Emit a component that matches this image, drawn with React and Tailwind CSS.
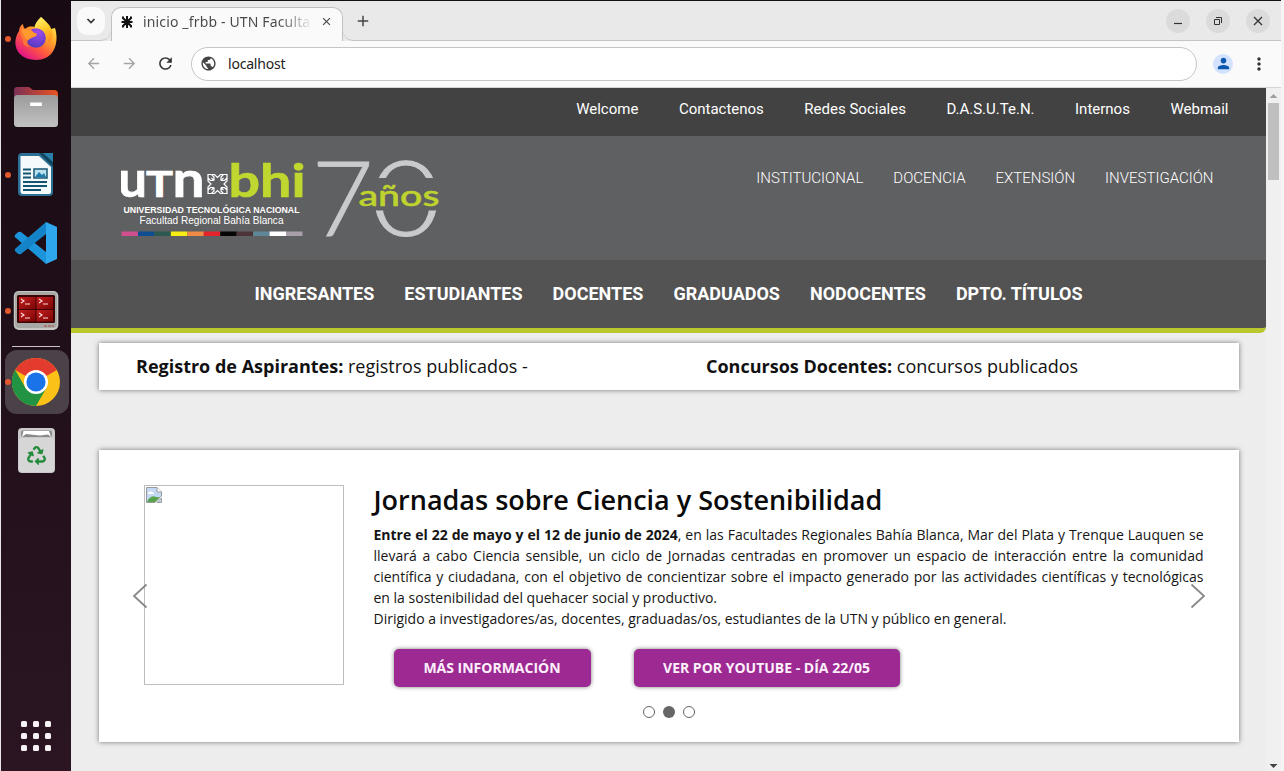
import React from "react";
import { MdPerson, MdRefresh, MdArrowBack, MdArrowForward, MdPublic, MdMoreVert, MdAdd, MdClose } from "react-icons/md";
import { FaRecycle } from "react-icons/fa";

function Firefox() {
  return (
    <svg width="44" height="46" viewBox="0 0 44 46">
      <defs>
        <linearGradient id="ffBody" x1="0.85" y1="0.1" x2="0.25" y2="0.95">
          <stop offset="0" stopColor="#ffe94a" />
          <stop offset="0.35" stopColor="#ffa62b" />
          <stop offset="0.65" stopColor="#ff5a3c" />
          <stop offset="1" stopColor="#e31587" />
        </linearGradient>
        <linearGradient id="ffFlame" x1="0.3" y1="0" x2="0.6" y2="1">
          <stop offset="0" stopColor="#fff36a" />
          <stop offset="0.5" stopColor="#ffc629" />
          <stop offset="1" stopColor="#ff8a22" />
        </linearGradient>
        <radialGradient id="ffGlobe" cx="0.6" cy="0.2" r="0.9">
          <stop offset="0" stopColor="#a24be8" />
          <stop offset="0.6" stopColor="#6d3fd0" />
          <stop offset="1" stopColor="#4a3cb0" />
        </radialGradient>
      </defs>
      <path d="M5 15C5 12 7 9 9 8C9 10 10 12 11 13C15 9 20 11 22 11L27 1C33 6 35 9 37 13L41 12C45 24 42 44 22 44C2 44-3 27 5 15Z" fill="url(#ffBody)" />
      <path d="M27 1C21 7 20 10 21 13C29 13 35 20 34 28C39 24 40 16 37 13C36 8 30 5 27 1Z" fill="url(#ffFlame)" />
      <circle cx="22" cy="22" r="9.8" fill="url(#ffGlobe)" />
      <path d="M6 17C9 11 17 12 20 17C23 17 23 18 22 20C19 21 17 22 14 24C12 28 14 30 17 31C12 31 9 29 9 25Z" fill="#ff7636" />
      <path d="M7 14C11 12 17 13 20 17C23 17 23 18 22 20C18 21 16 22 14 24C12 24 10 20 7 14Z" fill="#ff9b2e" />
    </svg>
  );
}

function Files() {
  return (
    <svg width="46" height="42" viewBox="0 0 46 42">
      <defs>
        <linearGradient id="flBack"><stop offset="0" stopColor="#7c2e57" /><stop offset="1" stopColor="#e95420" /></linearGradient>
        <linearGradient id="flFront" x2="0" y2="1"><stop offset="0" stopColor="#9b9b9b" /><stop offset="1" stopColor="#c2c2c2" /></linearGradient>
      </defs>
      <path d="M1 12V4Q1 1 4 1H16L20 4H41Q45 4 45 8V14H1Z" fill="url(#flBack)" />
      <rect x="1" y="9" width="44" height="32" rx="3.500" fill="url(#flFront)" />
      <rect x="17" y="16.500" width="12" height="3.500" rx="1" fill="#fff" />
    </svg>
  );
}

function Writer() {
  return (
    <svg width="38" height="46" viewBox="0 0 38 46">
      <path d="M5 1H36V40Q36 44 32 44H5Q1 44 1 40V5Q1 1 5 1Z" fill="#2c7096" />
      <path d="M4 4H22L34 15V40Q34 42 31 42H6Q3.500 42 3.500 39V4Z" fill="#f4fafb" />
      <path d="M22 1H36V15Z" fill="#124660" />
      <path d="M26 1H36V10Z" fill="#2a80a9" />
      <path d="M6 17.500H14M6 21.500H14M6 25.500H14M6 30H30M6 34H30M6 38H24" stroke="#145473" strokeWidth="1.800" />
      <rect x="17" y="17" width="13" height="9" fill="#bce2ef" stroke="#145473" strokeWidth="1.500" />
      <path d="M18 25L22 20L25 23L27 21L29 25Z" fill="#1e7aa8" />
    </svg>
  );
}

function Code() {
  return (
    <svg width="44" height="44" viewBox="0 0 44 44">
      <path d="M32 43V31L7 11Q5 10 3 12L1 14Q0 16 2 17Z" fill="#1b94db" />
      <path d="M32 1V13L7 33Q5 34 3 32L1 30Q0 28 2 27Z" fill="#1583c7" />
      <path d="M32 1L43 6V38L32 43Z" fill="#2fa7ee" />
    </svg>
  );
}

function Terminator() {
  return (
    <svg width="46" height="42" viewBox="0 0 46 42">
      <defs><linearGradient id="tmRed" x2="1" y2="1"><stop offset="0" stopColor="#c51e1e" /><stop offset="1" stopColor="#7c0505" /></linearGradient></defs>
      <rect x="0.800" y="1" width="44.500" height="39" rx="5" fill="#c8c8c4" />
      <rect x="2" y="2" width="42" height="36" rx="4" fill="#a8a8a5" />
      <rect x="4" y="5" width="38" height="28" rx="1.500" fill="#3b0505" />
      <g fill="url(#tmRed)">
        <rect x="6" y="7" width="16.500" height="12" /><rect x="23.500" y="7" width="16.500" height="12" />
        <rect x="6" y="20" width="16.500" height="11.500" /><rect x="23.500" y="20" width="16.500" height="11.500" />
      </g>
      <path d="M8 9l3 2-3 2M12 14h5M26 9l3 2-3 2M30 14h5M8 23l3 2-3 2M12 28h5M26 23l3 2-3 2M30 28h5" fill="none" stroke="#ffdede" strokeWidth="1.100" />
      <path d="M31 36H41" stroke="#b3443d" strokeWidth="1.200" strokeDasharray="3 1" />
    </svg>
  );
}

function Chrome() {
  return (
    <svg width="48" height="48" viewBox="0 0 48 48">
      <circle cx="24" cy="24" r="24" fill="#fbc116" />
      <path d="M24 24L3.200 12A24 24 0 0 1 44.800 12Z" fill="#e33b2e" />
      <path d="M3.200 12A24 24 0 0 0 24 48L34.400 30L24 24L13.600 30Z" fill="#229342" />
      <circle cx="24" cy="24" r="12" fill="#fff" />
      <circle cx="24" cy="24" r="9.600" fill="#1a73e8" />
    </svg>
  );
}

function Trash() {
  return (
    <div className="relative h-[45px] w-[37px]">
      <svg width="37" height="45" viewBox="0 0 37 45">
        <rect width="37" height="45" rx="4" fill="#c9c9c9" />
        <rect x="1" y="10" width="35" height="34" rx="3" fill="#d6d6d6" />
        <rect x="3" y="2.500" width="31" height="6.500" rx="2" fill="#8a8a8a" />
        <path d="M4 9L5.500 3H31L33 9L30 6.500L22 7.500L8 6Z" fill="#fff" />
      </svg>
      <FaRecycle className="absolute left-[9px] top-[18px] text-[#258a3b]" size={19} />
    </div>
  );
}

function DockSlot({ height, running, active, children }) {
  return (
    <div className={`${height} relative flex w-full items-center justify-center`}>
      {active && <span className="absolute inset-y-0 left-1 w-16 rounded-xl bg-[#4b4149]" />}
      {running && <span className="absolute left-1 top-1/2 size-[6px] -translate-y-1/2 rounded-full bg-[#e2592f]" />}
      <span className="relative">{children}</span>
    </div>
  );
}

function Dock() {
  const dots = [0, 1, 2, 3, 4, 5, 6, 7, 8];
  return (
    <aside className="flex w-[71px] shrink-0 flex-col border-l border-[#e8e5e7] bg-gradient-to-b from-[#180a12] to-[#2b1523] pt-[5px]">
      <DockSlot height="h-[68px]" running><Firefox /></DockSlot>
      <DockSlot height="h-[68px]"><Files /></DockSlot>
      <DockSlot height="h-[68px]" running><Writer /></DockSlot>
      <DockSlot height="h-[68px]"><Code /></DockSlot>
      <DockSlot height="h-[67px]" running><Terminator /></DockSlot>
      <div className="mx-auto mt-[2px] mb-[3px] h-px w-12 bg-[#c9c2c7]" />
      <DockSlot height="h-[64px]" running active><Chrome /></DockSlot>
      <DockSlot height="h-[72px]"><Trash /></DockSlot>
      <div className="mx-auto mt-auto mb-[20px] grid grid-cols-3 gap-[6px]">
        {dots.map((d) => <span key={d} className="size-[6px] rounded-[1.500px] bg-[#f7f2f5]" />)}
      </div>
    </aside>
  );
}

function TabBar() {
  return (
    <div className="flex h-[40px] shrink-0 bg-[#e9e9e9]">
      <div className="flex w-[40px] items-center justify-center rounded-br-[10px] border-b border-[#c4c4c4]">
        <span className="flex size-7 items-center justify-center rounded-[10px] bg-[#fafafa]">
          <svg width="10" height="6" viewBox="0 0 10 6"><path d="M1.500 1L5 4.500L8.500 1" fill="none" stroke="#333" strokeWidth="1.700" /></svg>
        </span>
      </div>
      <div className="mt-[6px] flex w-[232px] items-center rounded-t-[10px] border border-b-0 border-[#c0c0c0] bg-[#fafafa] pb-[6px]">
        <svg className="ml-[9px] shrink-0" width="12" height="14" viewBox="0 0 12 14">
          <path d="M6 1V13M0.500 7H11.500M2 1.500V3L6 7L10 3V1.500M2 12.500V11L6 7L10 11V12.500" fill="none" stroke="#111" strokeWidth="2" />
        </svg>
        <span className="ml-[10px] w-[170px] overflow-hidden whitespace-nowrap bg-gradient-to-r from-[#474747] from-80% to-transparent bg-clip-text font-['Noto_Sans',sans-serif] text-[14px] leading-5 tracking-[0.150px] text-transparent">inicio _frbb - UTN Faculta</span>
        <MdClose className="ml-[7px] shrink-0 text-[#444]" size={13} />
      </div>
      <div className="flex flex-1 items-center rounded-bl-[10px] border-b border-[#c4c4c4] pr-[11px] pl-[11px]">
        <MdAdd size={18} className="text-[#444]" />
        <div className="ml-auto flex gap-[16px]">
          <span className="flex size-6 items-center justify-center rounded-full bg-[#dbdbdb]"><svg width="10" height="10"><path d="M1 7.500H9" stroke="#333" strokeWidth="1.200" /></svg></span>
          <span className="flex size-6 items-center justify-center rounded-full bg-[#dbdbdb]"><svg width="10" height="10" fill="none" stroke="#333"><path d="M1.500 3.500H6.500V8.500H1.500ZM3 1.500H8.500V7" /></svg></span>
          <span className="flex size-6 items-center justify-center rounded-full bg-[#dbdbdb]"><svg width="10" height="10"><path d="M1 1L9 9M9 1L1 9" stroke="#333" strokeWidth="1.300" /></svg></span>
        </div>
      </div>
    </div>
  );
}

function Toolbar() {
  return (
    <div className="flex h-[47px] shrink-0 items-center border-b border-[#d5d5d5] bg-[#fafafa] pb-px pl-[14px]">
      <MdArrowBack size={17} className="text-[#a5a5a5]" />
      <MdArrowForward size={17} className="ml-[19px] text-[#a5a5a5]" />
      <MdRefresh size={19} className="ml-[18px] text-[#333]" />
      <div className="ml-[16px] flex h-[34px] w-[1006px] items-center rounded-full border border-[#c6c6c6] bg-white pl-[8px]">
        <MdPublic size={17} className="text-[#444]" />
        <span className="ml-[11px] font-['Noto_Sans',sans-serif] text-[14px] leading-5 tracking-[-0.200px] text-[#222]">localhost</span>
      </div>
      <span className="ml-[16px] flex size-5 items-center justify-center rounded-full bg-[#d3e3fd]"><MdPerson size={17} className="text-[#0b57b0]" /></span>
      <MdMoreVert size={20} className="ml-[16px] text-[#333]" />
    </div>
  );
}

const STRIPES = ["#cf4f8f", "#0f4d92", "#2c5a50", "#f7ec13", "#f08a45", "#e3242b", "#050505", "#4d3438", "#5d8797", "#ffffff", "#a89fab"];

function Logo() {
  return (
    <svg width="190" height="92" viewBox="0 0 190 92">
      <text y="50" fill="#fff" stroke="#fff" strokeWidth="0.700" fontFamily="Lato, sans-serif" fontWeight="700" fontSize="50">
        <tspan x="-3" textLength="29" lengthAdjust="spacingAndGlyphs">u</tspan>
        <tspan x="25" fontSize="36" textLength="27" lengthAdjust="spacingAndGlyphs">T</tspan>
        <tspan x="51.500" textLength="32" lengthAdjust="spacingAndGlyphs">n</tspan>
      </text>
      <g transform="translate(96.500 37)" fill="none" stroke="#fff" strokeWidth="1.200">
        {[0, 90, 180, 270].map((r) => (
          <path key={r} transform={`rotate(${r})`} d="M-3.500-3.500L-6-6M-3.500-3.500V-7L-6-9.500M3.500-3.500V-7L6-9.500M-6-9.500H-3L0-6.500L3-9.500H6M6-9.500L9.500-9.500V-6" />
        ))}
      </g>
      <text x="107.500" y="50" textLength="77" lengthAdjust="spacingAndGlyphs" fill="#c0d72f" stroke="#c0d72f" strokeWidth="0.700" fontFamily="Lato, sans-serif" fontWeight="700" fontSize="46">bhi</text>
      <text x="2.500" y="66" textLength="176" lengthAdjust="spacingAndGlyphs" fill="#fff" fontFamily="Liberation Sans, sans-serif" fontWeight="700" fontSize="9.500">UNIVERSIDAD TECNOLÓGICA NACIONAL</text>
      <text x="18.500" y="77" textLength="144" lengthAdjust="spacingAndGlyphs" fill="#fff" fontFamily="Liberation Sans, sans-serif" fontSize="10.500">Facultad Regional Bahía Blanca</text>
      {STRIPES.map((c, i) => <rect key={c} x={0.5 + i * 16.45} y="84.500" width="16.500" height="4.500" fill={c} />)}
    </svg>
  );
}

function Anniversary() {
  return (
    <svg width="130" height="94" viewBox="0 0 130 94">
      <defs>
        <clipPath id="ringGap"><rect x="50" y="0" width="80" height="31" /><rect x="50" y="63.500" width="80" height="30" /></clipPath>
      </defs>
      <g fill="#c9cacc" stroke="#c9cacc" strokeWidth="0.900" fontFamily="Lato, sans-serif" fontWeight="300" fontSize="104">
        <text transform="translate(-2.500 88.500) scale(1.030 1)">7</text>
        <g clipPath="url(#ringGap)"><text transform="translate(57 89) scale(1.160 1.010)">0</text></g>
      </g>
      <text x="44.500" y="59" textLength="81" lengthAdjust="spacingAndGlyphs" fill="#bfd32f" stroke="#bfd32f" strokeWidth="0.500" fontFamily="Lato, sans-serif" fontWeight="500" fontSize="29">años</text>
    </svg>
  );
}

function SiteHeader() {
  return (
    <header className="font-[Roboto,sans-serif] text-white">
      <nav className="flex h-12 justify-end gap-[40.500px] bg-[#424242] pt-[10px] pr-[37.500px] text-[15px] leading-[22px]">
        {["Welcome", "Contactenos", "Redes Sociales", "D.A.S.U.Te.N.", "Internos", "Webmail"].map((t) => <a key={t}>{t}</a>)}
      </nav>
      <div className="flex h-[124px] bg-[#5f6062] pl-[50px]">
        <div className="flex pt-[11px]">
          <div className="w-[193px]"><Logo /></div>
          <Anniversary />
        </div>
        <nav className="ml-auto flex gap-[30px] pt-[31px] pr-[52.500px] text-[15px] leading-[22px] font-light">
          {["INSTITUCIONAL", "DOCENCIA", "EXTENSIÓN", "INVESTIGACIÓN"].map((t) => <a key={t}>{t}</a>)}
        </nav>
      </div>
      <nav className="flex h-[73px] justify-center gap-[30px] rounded-br-md border-b-[5px] border-[#bac82d] bg-[#535353] pt-[22px] text-[18px] leading-6 font-bold">
        {["INGRESANTES", "ESTUDIANTES", "DOCENTES", "GRADUADOS", "NODOCENTES", "DPTO. TÍTULOS"].map((t) => <a key={t}>{t}</a>)}
      </nav>
    </header>
  );
}

function BrokenImage() {
  return (
    <div className="size-[200px] shrink-0 border border-[#bdbdbd] p-px">
      <svg width="16" height="16" viewBox="0 0 16 16">
        <path d="M0.500 0.500H11L15.500 5V9L9 15.500H0.500Z" fill="#c5d8f3" stroke="#9a9a9a" />
        <path d="M1 15C3 10 7 8 10 10L14 10.500L9 15Z" fill="#57a34b" />
        <path d="M2 6Q4 3 6 5Q8 5 8 7H2Z" fill="#fff" />
        <path d="M11 0.500V5H15.500" fill="#fff" stroke="#9a9a9a" />
        <path d="M11 15.500H15.500V11Z" fill="#c5d8f3" stroke="#9a9a9a" />
      </svg>
    </div>
  );
}

function Slide() {
  return (
    <section className="relative mt-[60px] h-[292px] bg-white shadow-[0_0_5px_rgba(0,0,0,0.500)]">
      <div className="flex pt-[35px] pl-[45px]">
        <BrokenImage />
        <div className="ml-[29.500px] w-[830px]">
          <h2 className="text-[27px] leading-[30px] font-semibold text-[#0a0a0a]">Jornadas sobre Ciencia y Sostenibilidad</h2>
          <p className="mt-[9px] text-justify text-[14px] leading-[21px] text-[#151515]">
            <b>Entre el 22 de mayo y el 12 de junio de 2024</b>, en las Facultades Regionales Bahía Blanca, Mar del Plata y Trenque Lauquen se llevará a cabo Ciencia sensible, un ciclo de Jornadas centradas en promover un espacio de interacción entre la comunidad científica y ciudadana, con el objetivo de concientizar sobre el impacto generado por las actividades científicas y tecnológicas en la sostenibilidad del quehacer social y productivo.<br />
            Dirigido a investigadores/as, docentes, graduadas/os, estudiantes de la UTN y público en general.
          </p>
          <div className="mt-[20px] ml-5 flex gap-[43px] text-[14px] font-bold text-[#fdf0fc]">
            <button className="h-[38px] w-[197px] rounded-[5px] bg-[#9c2a92] pb-[2px] shadow-[0_0_4px_rgba(0,0,0,0.500)]">MÁS INFORMACIÓN</button>
            <button className="h-[38px] w-[266px] rounded-[5px] bg-[#9c2a92] pb-[2px] shadow-[0_0_4px_rgba(0,0,0,0.500)]">VER POR YOUTUBE - DÍA 22/05</button>
          </div>
        </div>
      </div>
      <div className="mt-[19px] flex justify-center gap-2">
        <span className="size-3 rounded-full border border-[#666]" />
        <span className="size-3 rounded-full bg-[#666]" />
        <span className="size-3 rounded-full border border-[#666]" />
      </div>
      <svg className="absolute top-[133px] left-[33px]" width="16" height="26" viewBox="0 0 16 26"><path d="M14.500 1.500L2 13L14.500 24.500" fill="none" stroke="#888" strokeWidth="1.800" /></svg>
      <svg className="absolute top-[133px] left-[1091px]" width="16" height="26" viewBox="0 0 16 26"><path d="M1.500 1.500L14 13L1.500 24.500" fill="none" stroke="#888" strokeWidth="1.800" /></svg>
    </section>
  );
}

function Scrollbar() {
  return (
    <div className="flex w-[15px] shrink-0 flex-col items-center bg-[#f0f0f0]">
      <svg className="shrink-0" width="15" height="15"><path d="M3.500 10L7.500 6L11.500 10Z" fill="#a0a0a0" /></svg>
      <div className="h-[77px] w-[11px] bg-[#bfbfbf]" />
      <svg className="mt-auto shrink-0" width="15" height="11"><path d="M3.500 4L7.500 8L11.500 4Z" fill="#444" /></svg>
    </div>
  );
}

export default function App() {
  return (
    <div className="flex h-[771px] w-[1284px] overflow-hidden bg-[#f4f4f4]">
      <Dock />
      <div className="flex w-[1210px] flex-col border-t border-[#111]">
        <TabBar />
        <Toolbar />
        <div className="flex min-h-0 flex-1">
          <main className="w-[1195px] bg-[#ededed] font-['Open_Sans','Noto_Sans',sans-serif]">
            <SiteHeader />
            <div className="mx-[28px] mt-[10px] w-[1140px]">
              <div className="flex h-[47px] items-center bg-white text-[18px] text-[#111] shadow-[0_0_5px_rgba(0,0,0,0.500)]">
                <p className="w-[570px] pl-[37px]"><b>Registro de Aspirantes:</b> registros publicados -</p>
                <p className="pl-[37px]"><b>Concursos Docentes:</b> concursos publicados</p>
              </div>
              <Slide />
            </div>
          </main>
          <Scrollbar />
        </div>
      </div>
    </div>
  );
}
